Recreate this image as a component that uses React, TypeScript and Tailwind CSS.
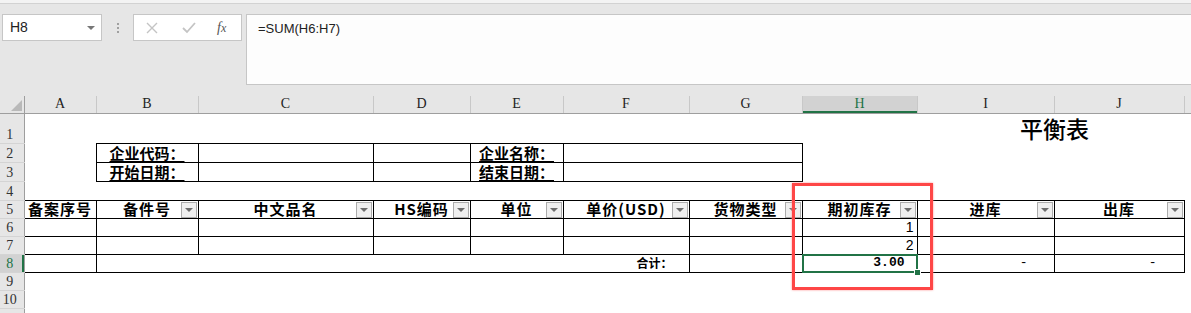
import React from 'react';

const COLS = ['A', 'B', 'C', 'D', 'E', 'F', 'G', 'H', 'I', 'J'];
const WIDTHS = [24, 72, 102, 175, 97, 93, 126, 113, 115, 137, 130, 7];

const cjk = "font-['Noto_Sans_CJK_SC',sans-serif]";

function FilterBtn() {
  return (
    <span className="absolute right-[1px] top-[1px] flex h-[16px] w-[16px] items-center justify-center border border-[#acacac] bg-[#efefef]">
      <span className="h-0 w-0 border-x-[4px] border-t-[4px] border-x-transparent border-t-[#6d6d6d]" />
    </span>
  );
}

function HeadCell({ children, filter = true }: { children: React.ReactNode; filter?: boolean }) {
  return (
    <td className="relative whitespace-nowrap border border-black p-0 text-center text-[15px] font-bold leading-[16px] tracking-[1px] text-black">
      {children}
      {filter && <FilterBtn />}
    </td>
  );
}

function RowLabel({ n, active = false }: { n?: number; active?: boolean }) {
  return (
    <td
      className={
        active
          ? "border-r border-b border-r-[#9e9e9e] border-b-[#d4d4d4] bg-[#d2d2d2] p-0 pr-[4px] text-center align-bottom font-['Liberation_Serif',serif] text-[14px] leading-[17px] text-[#217346] shadow-[inset_-2px_0_0_#217346]"
          : "border-r border-b border-r-[#9e9e9e] border-b-[#d4d4d4] bg-[#e6e6e6] p-0 pr-[4px] text-center align-bottom font-['Liberation_Serif',serif] text-[14px] leading-[17px] text-[#333]"
      }
    >
      {n}
    </td>
  );
}

function Blank({ span = 1 }: { span?: number }) {
  return <td colSpan={span} className="p-0" />;
}

function Boxed({ children, className = '' }: { children?: React.ReactNode; className?: string }) {
  return <td className={`border border-black p-0 ${className}`}>{children}</td>;
}

export default function App() {
  return (
    <div className={`relative h-[313px] w-[1191px] overflow-hidden bg-white ${cjk}`}>
      {/* ribbon edge + formula bar */}
      <div className="flex h-[96px] flex-col bg-[#e6e6e6]">
        <div className="h-[4px] border-b border-[#d2d2d2] bg-[#f3f3f3]" />
        <div className="mt-[10px] flex items-start">
          <div className="ml-[2px] flex h-[27px] w-[100px] items-center justify-between border border-[#c6c6c6] bg-white pl-[7px] pr-[6px]">
            <span className="font-['Liberation_Sans',sans-serif] text-[14px] text-[#222]">H8</span>
            <span className="h-0 w-0 border-x-[4px] border-t-[4px] border-x-transparent border-t-[#777]" />
          </div>
          <div className="flex h-[27px] w-[31px] items-center justify-center">
            <span className="flex flex-col gap-[2px]">
              <span className="h-[2px] w-[2px] bg-[#a0a0a0]" />
              <span className="h-[2px] w-[2px] bg-[#a0a0a0]" />
              <span className="h-[2px] w-[2px] bg-[#a0a0a0]" />
            </span>
          </div>
          <div className="flex h-[27px] w-[109px] items-center border border-[#c6c6c6] bg-white">
            <svg className="ml-[12px]" width="12" height="12" viewBox="0 0 12 12">
              <path d="M1 1 L11 11 M11 1 L1 11" stroke="#c4c4c4" strokeWidth="1.4" fill="none" />
            </svg>
            <svg className="ml-[24px]" width="14" height="12" viewBox="0 0 14 12">
              <path d="M1 6 L5 10 L13 1" stroke="#c4c4c4" strokeWidth="1.8" fill="none" />
            </svg>
            <span className="ml-[21px] font-['Liberation_Serif',serif] text-[14px] italic text-[#555]">
              f<span className="text-[12px]">x</span>
            </span>
          </div>
          <div className="ml-[4px] h-[71px] flex-1 border border-r-0 border-[#c6c6c6] bg-[#fdfdfd] pl-[11px] pt-[4px] font-['Liberation_Sans',sans-serif] text-[13px] text-[#222]">
            =SUM(H6:H7)
          </div>
        </div>
      </div>

      {/* sheet */}
      <div className="relative">
        <table className="w-[1191px] table-fixed border-collapse">
          <colgroup>
            {WIDTHS.map((w, i) => (
              <col key={i} style={{ width: w }} />
            ))}
          </colgroup>
          <tbody>
            <tr className="h-[17px]">
              <td className="border-r border-b border-r-[#9e9e9e] border-b-[#9e9e9e] bg-[#e6e6e6] p-0">
                <svg className="ml-[11px] mt-[3px]" width="11" height="11" viewBox="0 0 11 11">
                  <path d="M11 0 L11 11 L0 11 Z" fill="#b9b9b9" />
                </svg>
              </td>
              {COLS.map((c) => (
                <td
                  key={c}
                  className={
                    c === 'H'
                      ? "border-r border-b border-r-[#c8c8c8] border-b-[#9e9e9e] bg-[#d2d2d2] p-0 text-center font-['Liberation_Serif',serif] text-[14px] leading-[16px] text-[#217346] shadow-[inset_0_-2px_0_#217346]"
                      : "border-r border-b border-r-[#c8c8c8] border-b-[#9e9e9e] bg-[#e6e6e6] p-0 text-center font-['Liberation_Serif',serif] text-[14px] leading-[16px] text-[#222]"
                  }
                >
                  {c}
                </td>
              ))}
              <td className="border-b border-b-[#9e9e9e] bg-[#e6e6e6] p-0" />
            </tr>

            <tr className="h-[30px]">
              <RowLabel n={1} />
              <Blank span={8} />
              <td colSpan={2} className="p-0 pl-[8px] text-center text-[23px] font-medium leading-[26px] text-black">
                平衡表
              </td>
              <Blank />
            </tr>

            <tr className="h-[19px]">
              <RowLabel n={2} />
              <Blank />
              <Boxed className="whitespace-nowrap text-center text-[15px] font-bold leading-[16px]">
                <span className="underline underline-offset-2">企业代码：</span>
              </Boxed>
              <Boxed />
              <Boxed />
              <Boxed className="whitespace-nowrap text-center text-[15px] font-bold leading-[16px]">
                <span className="underline underline-offset-2">企业名称：</span>
              </Boxed>
              <td colSpan={2} className="border border-black p-0" />
              <Blank span={4} />
            </tr>

            <tr className="h-[19px]">
              <RowLabel n={3} />
              <Blank />
              <Boxed className="whitespace-nowrap text-center text-[15px] font-bold leading-[16px]">
                <span className="underline underline-offset-2">开始日期：</span>
              </Boxed>
              <Boxed />
              <Boxed />
              <Boxed className="whitespace-nowrap text-center text-[15px] font-bold leading-[16px]">
                <span className="underline underline-offset-2">结束日期：</span>
              </Boxed>
              <td colSpan={2} className="border border-black p-0" />
              <Blank span={4} />
            </tr>

            <tr className="h-[19px]">
              <RowLabel n={4} />
              <Blank span={11} />
            </tr>

            <tr className="h-[18px]">
              <RowLabel n={5} />
              <HeadCell filter={false}>备案序号</HeadCell>
              <HeadCell>备件号</HeadCell>
              <HeadCell>中文品名</HeadCell>
              <HeadCell>HS编码</HeadCell>
              <HeadCell>单位</HeadCell>
              <HeadCell>单价(USD)</HeadCell>
              <HeadCell>货物类型</HeadCell>
              <HeadCell>期初库存</HeadCell>
              <HeadCell>进库</HeadCell>
              <HeadCell>出库</HeadCell>
              <Blank />
            </tr>

            {[1, 2].map((v, i) => (
              <tr key={v} className="h-[18px]">
                <RowLabel n={6 + i} />
                <Boxed />
                <Boxed />
                <Boxed />
                <Boxed />
                <Boxed />
                <Boxed />
                <Boxed />
                <Boxed className="pr-[3px] text-right font-['Liberation_Sans',sans-serif] text-[14px] leading-[16px] text-black">
                  {v}
                </Boxed>
                <Boxed />
                <Boxed />
                <Blank />
              </tr>
            ))}

            <tr className="h-[18px]">
              <RowLabel n={8} active />
              <Boxed />
              <td colSpan={5} className="whitespace-nowrap border border-black p-0 pr-[16px] text-right text-[12px] font-bold leading-[14px]">
                合计：
              </td>
              <Boxed />
              <td className="relative border border-black p-0 pr-[12px] text-right font-['Liberation_Mono',monospace] text-[13px] font-bold leading-[16px]">
                3.00
                <span className="absolute -left-[1px] -top-[1px] -right-[1px] -bottom-[1px] border-2 border-[#217346]" />
                <span className="absolute -bottom-[4px] -right-[4px] h-[7px] w-[7px] border border-white bg-[#217346]" />
              </td>
              <Boxed className="pr-[26px] text-right font-['Liberation_Mono',monospace] text-[13px] leading-[16px]">-</Boxed>
              <Boxed className="pr-[27px] text-right font-['Liberation_Mono',monospace] text-[13px] leading-[16px]">-</Boxed>
              <Blank />
            </tr>

            {[9, 10].map((n) => (
              <tr key={n} className="h-[18px]">
                <RowLabel n={n} />
                <Blank span={11} />
              </tr>
            ))}
            <tr className="h-[18px]">
              <RowLabel />
              <Blank span={11} />
            </tr>
          </tbody>
        </table>

        {/* annotation box drawn over the sheet */}
        <div className="pointer-events-none absolute left-[792px] top-[87px] h-[107px] w-[141px] border-[3px] border-[#fe4646] shadow-[0_0_2px_#ff9090]" />
      </div>
    </div>
  );
}
